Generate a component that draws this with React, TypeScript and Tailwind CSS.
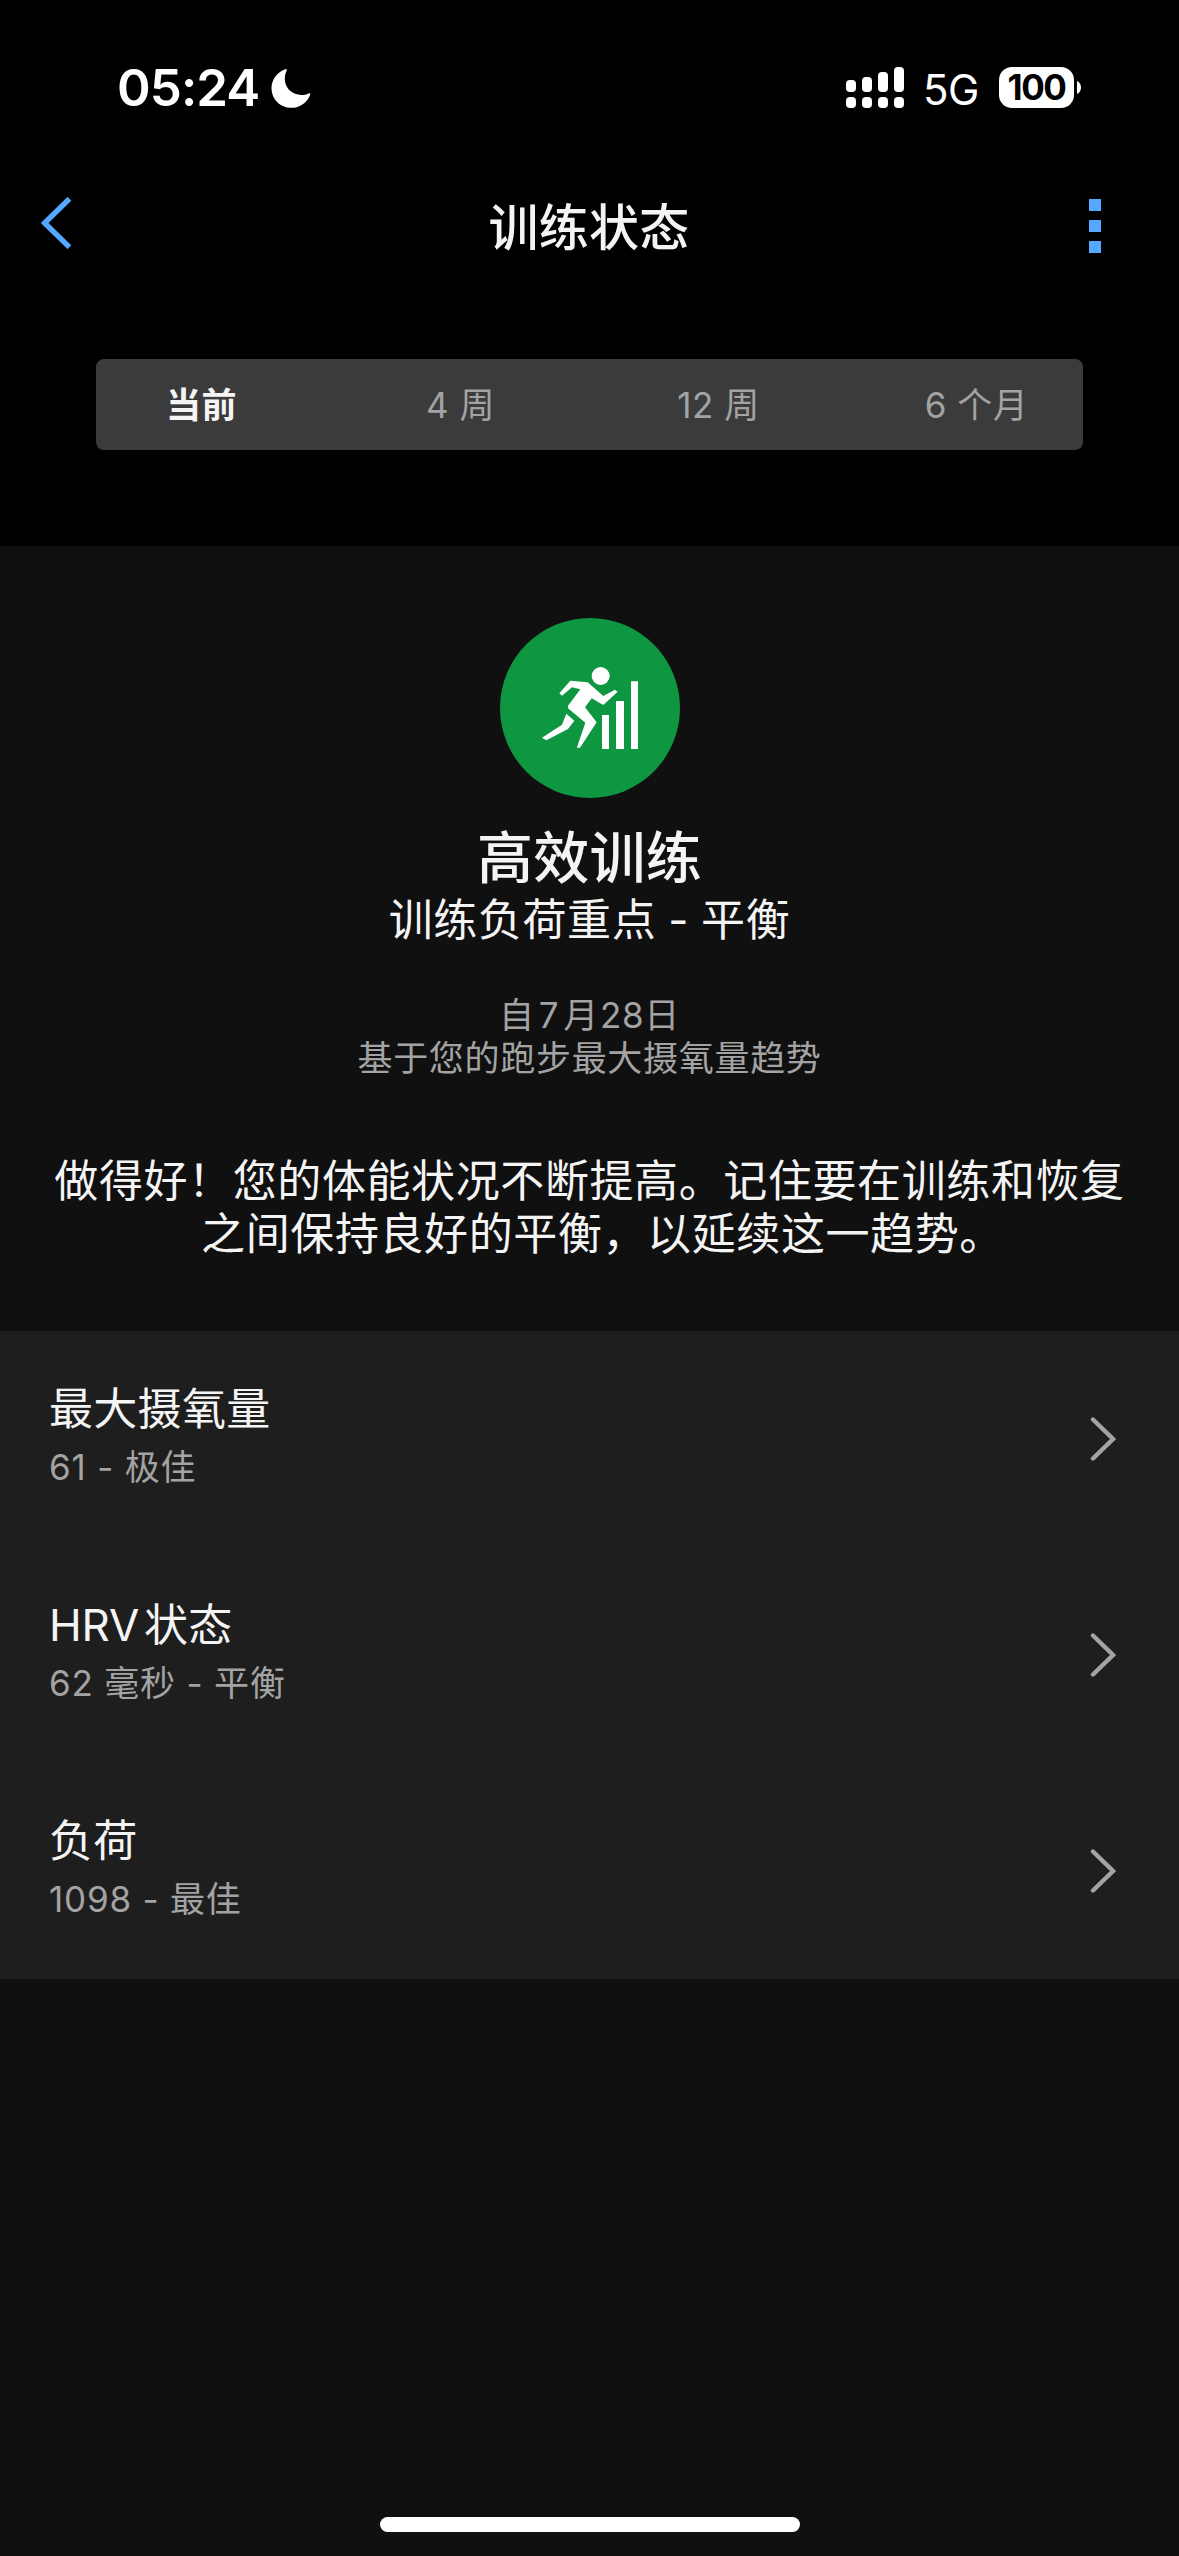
import type { ReactNode } from "react";

const periods = ["当前", "4 周", "12 周", "6 个月"];

const metrics = [
  { id: "vo2max", title: "最大摄氧量", value: "61 - 极佳" },
  {
    id: "hrv",
    title: (
      <>
        <span className="mr-[5px] tracking-[-0.2px]">HRV</span>状态
      </>
    ),
    value: "62 毫秒 - 平衡",
  },
  { id: "load", title: "负荷", value: "1098 - 最佳" },
];

const signalBars = ["h-[12px]", "h-[15px]", "h-[20px]", "h-[25px]"];

function StatusBar() {
  return (
    <div className="flex h-[176px] items-start justify-between pl-[117px] pr-[98px] pt-[67px] text-white">
      <div className="flex h-[42px] items-center gap-[12px]">
        <span className="text-[51px] font-semibold leading-[42px] tracking-[-0.9px]">05:24</span>
        <svg className="h-[40px] w-[40px]" viewBox="0 0 40 40" fill="currentColor">
          <path d="M14.2 1.2C15.4.7 16.2 1.3 15.6 2.6 12.4 9.500 13.600 17.500 18.500 22.300 23.600 27.200 31.500 28.200 37.600 25.400 38.900 24.900 39.600 25.600 39.100 26.900 36.200 34.600 28.800 39.800 20.500 39.800 9.200 39.800.500 31 .500 19.900.500 11.600 6.200 3.900 14.200 1.200Z" />
        </svg>
      </div>
      <div className="flex h-[41px] items-center">
        <div className="flex h-[41px] items-end gap-[6px]">
          {signalBars.map((height) => (
            <div key={height} className="flex flex-col gap-[5px]">
              <div className={`${height} w-[10px] rounded-[4px] bg-white`} />
              <div className="h-[11px] w-[10px] rounded-[4px] bg-white" />
            </div>
          ))}
        </div>
        <span className="ml-[19px] mt-[4px] w-[76px] text-[42px] leading-[42px] tracking-[-0.5px]">5G</span>
        <div className="flex h-[41px] w-[75px] items-center justify-center rounded-[13px] bg-white text-[35px] font-bold leading-[41px] tracking-[-1.500px] text-black">
          100
        </div>
        <svg className="ml-[3px] h-[13px] w-[4px]" viewBox="0 0 4 13" fill="currentColor">
          <path d="M0 0C2.400 1 4 3.500 4 6.500S2.400 12 0 13Z" />
        </svg>
      </div>
    </div>
  );
}

function NavBar() {
  return (
    <div className="flex h-[183px] items-start justify-between pl-[41px] pr-[78px] text-[#54a8ff]">
      <svg className="mt-[21px] h-[52px] w-[48px]" viewBox="0 0 48 52" fill="none" stroke="currentColor" strokeWidth="5.400">
        <path d="M28.400 1.800 3.600 26 28.400 50.200" />
      </svg>
      <h1 className="mt-[16px] text-[50px] font-medium leading-[72px] tracking-[0.2px] text-[#f4f4f4]">训练状态</h1>
      <div className="mt-[23px] flex w-[12px] flex-col gap-[9px]">
        <div className="h-[12px] bg-[#54a8ff]" />
        <div className="h-[12px] bg-[#54a8ff]" />
        <div className="h-[12px] bg-[#54a8ff]" />
      </div>
    </div>
  );
}

function PeriodTabs() {
  return (
    <div className="mx-[96px] mb-[96px] flex h-[91px] justify-center rounded-[8px] bg-[#3b3b3b]">
      {periods.map((period, i) => (
        <div
          key={period}
          className={`w-[258px] shrink-0 text-center text-[35px] leading-[92px] tracking-[0.5px] ${
            i === 0 ? "pr-[2px] font-bold text-[#f4f4f4]" : "text-[#a3a3a3]"
          }`}
        >
          {period}
        </div>
      ))}
    </div>
  );
}

function RunnerBadge() {
  return (
    <svg className="h-[180px] w-[180px] rounded-full bg-[#0e9640]" viewBox="0 0 540 540" fill="#fff">
      <circle cx="302" cy="174" r="27" />
      <path d="M211 188 263 193 310 234 345 215 353 221 310 261 275 241 255 268 290 313 241 388Q236 392 231 388L256 314 204 271V263L241 214 216 208 186 233 178 226Z" />
      <path d="M199 287 223 308 204 333 139 367 126 359 186 320Z" />
      <path d="M306 291h21v102h-21zM348 249h24v144h-24zM393 190h21v203h-21z" />
    </svg>
  );
}

function StatusSummary() {
  return (
    <section className="flex h-[785px] flex-col items-center pt-[72px] text-center text-[#f4f4f4]">
      <RunnerBadge />
      <h2 className="mt-[20px] text-[56px] font-medium leading-[80px] tracking-[0.300px]">高效训练</h2>
      <p className="text-[44px] leading-[44px] tracking-[0.600px] [word-spacing:-1px]">训练负荷重点 - 平衡</p>
      <div className="mt-[52px] text-[35px] leading-[43px] tracking-[0.700px] text-[#a3a3a3]">
        <p>
          自<span className="ml-[4px] mr-[4px]">7</span>月<span className="ml-[1px]">28</span>日
        </p>
        <p>基于您的跑步最大摄氧量趋势</p>
      </div>
      <p className="mt-[75px] text-[44px] leading-[53px] tracking-[0.600px]">
        做得好！您的体能状况不断提高。记住要在训练和恢复
        <br />
        <span className="pl-[26px]">之间保持良好的平衡，以延续这一趋势。</span>
      </p>
    </section>
  );
}

function MetricRow({ title, value }: { title: ReactNode; value: string }) {
  return (
    <div className="flex h-[216px] items-center justify-between pl-[49px] pr-[63px]">
      <div className="pb-[6px]">
        <div className="text-[44px] leading-[62px] tracking-[0.300px] text-[#f4f4f4]">{title}</div>
        <div className="text-[35px] leading-[54px] tracking-[0.800px] text-[#a3a3a3]">{value}</div>
      </div>
      <svg className="h-[44px] w-[26px]" viewBox="0 0 26 44" fill="none" stroke="#a3a3a3" strokeWidth="4.400" strokeLinecap="round">
        <path d="M3 2.500 23 22 3 41.500" />
      </svg>
    </div>
  );
}

export default function App() {
  return (
    <div className="flex h-[2556px] w-[1179px] flex-col bg-[#101010] font-['Inter','Noto_Sans_CJK_SC',sans-serif]">
      <header className="bg-black">
        <StatusBar />
        <NavBar />
        <PeriodTabs />
      </header>
      <StatusSummary />
      <div className="bg-[#1e1e1e]">
        {metrics.map((metric) => (
          <MetricRow key={metric.id} title={metric.title} value={metric.value} />
        ))}
      </div>
      <div className="mx-auto mb-[24px] mt-auto h-[15px] w-[420px] rounded-full bg-white" />
    </div>
  );
}
